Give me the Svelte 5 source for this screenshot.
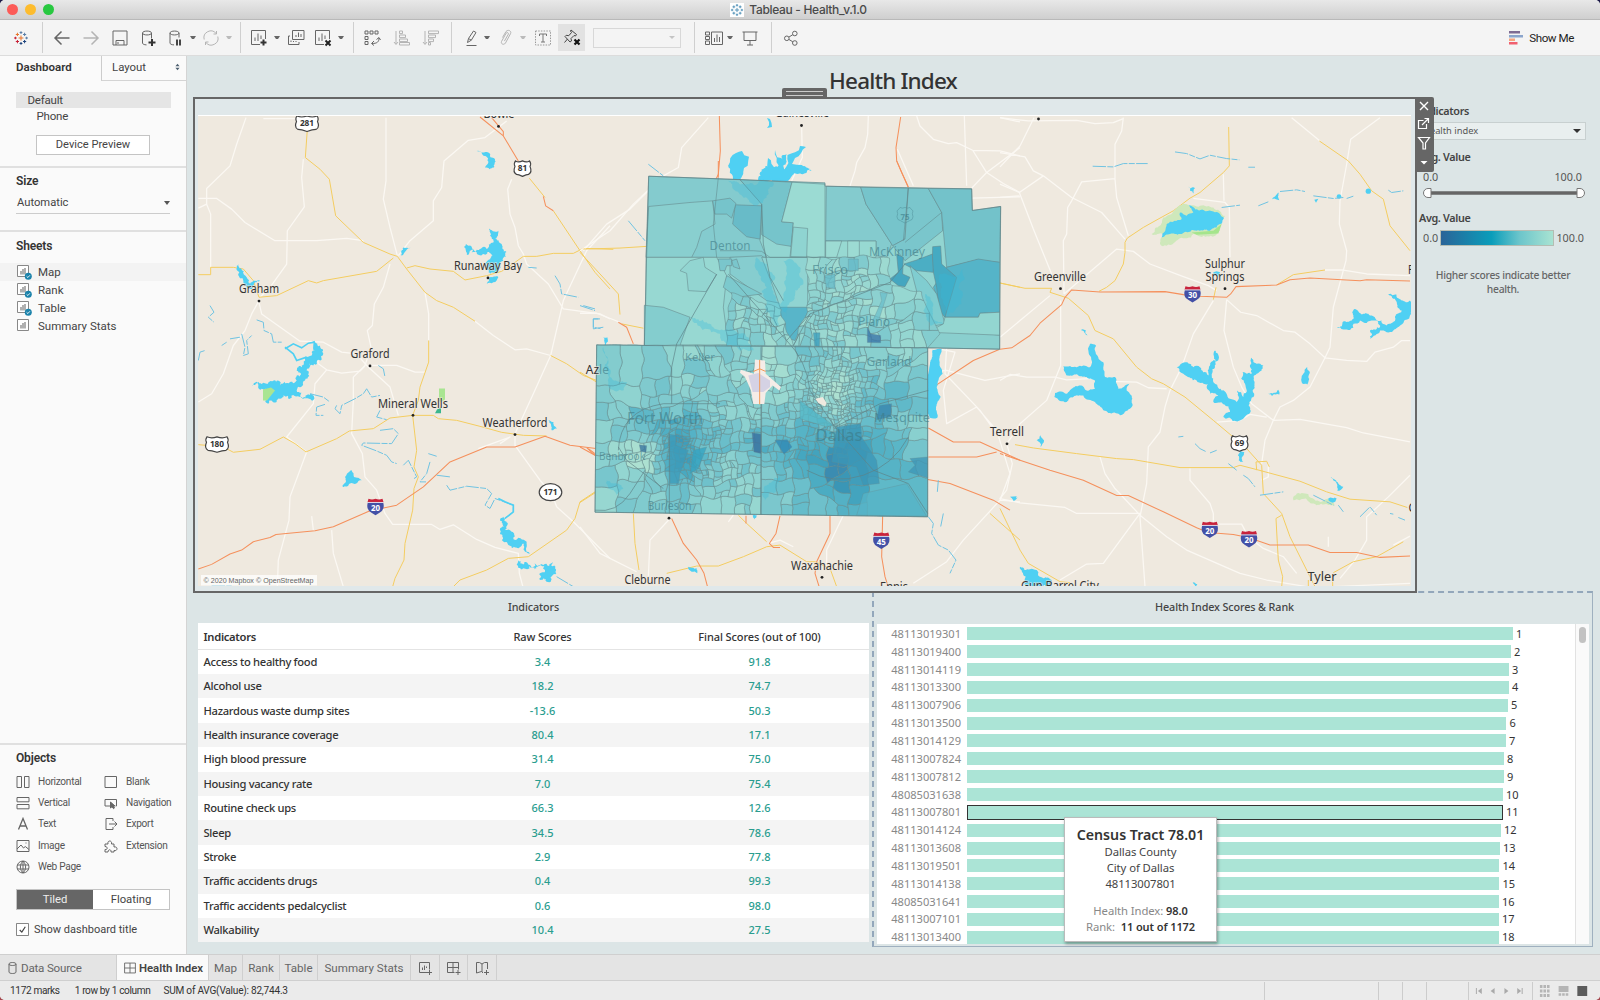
<script>
  const icons = {
    back: [{ d: 'M17.5 10H3M9.5 3.5L3 10l6.5 6.5', w: 1.5 }],
    fwd: [{ d: 'M2.5 10H17M10.5 3.5L17 10l-6.5 6.5', w: 1.5, c: '#b4b4b4' }],
    save: [{ d: 'M3 3h14v14H3zM6 17v-4.5h8V17M8 16v-2' }],
    dbadd: [{ d: 'M4.5 5v10c0 1 1.5 1.8 4 1.9M13.5 5v5.5M4.5 5c0-2.6 9-2.6 9 0s-9 2.6-9 0' }, { d: 'M14 11v7M10.5 14.5h7', w: 2, c: '#333' }],
    dbpause: [{ d: 'M5 5v10c0 1 1.5 1.8 4 1.9M14 5v4.5M5 5c0-2.6 9-2.6 9 0s-9 2.6-9 0' }, { d: 'M12 11.5v6M15 11.5v6', w: 1.8, c: '#333' }],
    refresh: [{ d: 'M3.2 11.5A6.8 6.8 0 0 1 15 5.4M16.8 8.5A6.8 6.8 0 0 1 5 14.6M12.5 6h3V3M7.5 14h-3v3', c: '#b4b4b4' }],
    chartadd: [{ d: 'M11 16.5H2.5v-14h14V11M6 13V9.500M9 13V5.500M12 11V7.500' }, { d: 'M14.500 11.500v6M11.500 14.500h6', w: 2, c: '#333' }],
    dup: [{ d: 'M6.500 2.500h11.500v9H6.500zM10 9V7M12.500 9V4.500M15 9V6M4 8H2.500v8.500H13V14M5 14v-1.500M7.500 14v-1M10 14v-1' }],
    chartx: [{ d: 'M11 16.5H2.500v-14h14V11M6 13V9.500M9 13V5.500M12 11V7.500' }, { d: 'M12.500 12.500l5 5M17.500 12.500l-5 5', w: 2, c: '#222' }],
    swap: [{ d: 'M3 3h3v3H3zM8 3h3v3H8zM13 3h3v3h-3zM3 8.500h3v3H3zM3 13.500h3v3H3zM17 10c0 4-2 5.500-7 5.500M14.500 11.500L17 9.500l1.500 2.500M12 13l-2.500 2.500L12 17.500' }],
    asc: [{ d: 'M4 3v13M2 14l2 2.500L6 14M7.500 3h3v2.600h-3zM7.500 7h6v2.600h-6zM7.500 11h8v2.600h-8zM7.500 14.500h10V17h-10z', c: '#b4b4b4' }],
    desc: [{ d: 'M4 3v13M2 14l2 2.500L6 14M7.500 3h10v2.600h-10zM7.500 7h7v2.600h-7zM7.500 11h5v2.600h-5zM7.500 14.500h2V17h-2z', c: '#b4b4b4' }],
    pen: [{ d: 'M5.500 17.500h10M6.500 14.500l1-4L12.500 3l2.500 1.500-4.700 7.700zM7.500 10.500l2.800 1.700' }],
    clip: [{ d: 'M6.500 9.500l3.500-6c2-2.500 6-.5 4.500 2.200l-5 9.300c-1.500 2.500-5 1-4-1.500l4.700-8.400c1-1.200 2.700-.2 2.200 1l-4 7', c: '#b4b4b4' }],
    tbox: [{ d: 'M2.500 3h15v14h-15z', dash: '1.500 1.200', c: '#999' }, { d: 'M6.500 8V6h7v2M10 6v8M8 14h4', c: '#777' }],
    pin: [{ d: 'M9 3l5.500 4.500-1 1.500-1.500-.5-3 3 .5 2.500-1.500 1L3 9.500l1.200-1.200 2.600.4L9.500 5.500 8.500 4zM5.500 12L2.500 15.500', c: '#444' }, { d: 'M12.500 12.500l5 5M17.500 12.500l-5 5', w: 2.200, c: '#111' }],
    layout: [{ d: 'M1.500 4h4v3h-4zM1.500 8.500h4v3h-4zM1.500 13h4v3.500h-4zM7.500 4h11v12.500h-11zM10.500 14v-4M13 14V6.500M15.500 14V9' }],
    present: [{ d: 'M2.500 4h15M4 4v8.500h12V4M10 12.500V17M7 17h6' }],
    share: [{ d: 'M3.500 10.300a2.300 2.300 0 1 0 4.600 0 2.300 2.300 0 1 0-4.600 0M11.500 5.500a2.300 2.300 0 1 0 4.600 0 2.300 2.300 0 1 0-4.600 0M11.500 15a2.300 2.300 0 1 0 4.600 0 2.300 2.300 0 1 0-4.600 0M8 9l3.800-2.300M8 11.500l3.800 2.300' }],
    horizontal: [{ d: 'M4 4.500h4.500v11H4zM11.500 4.500H16v11h-4.500z' }],
    vertical: [{ d: 'M4 4.500h12v4.300H4zM4 11.500h12v4.300H4z' }],
    text: [{ d: 'M5.500 15.500L10 4.500l4.500 11M7 12h6', w: 1.3 }],
    image: [{ d: 'M4 4.500h12v11H4zM4 13l4-4 2.500 3 1.800-1.500L16 13.500M12.500 7h1' }],
    web: [{ d: 'M4 10a6 6 0 1 0 12 0 6 6 0 1 0-12 0M4 8h12M4 12h12M10 4c-3.500 3.500-3.500 8.500 0 12M10 4c3.500 3.500 3.500 8.500 0 12M10 4v12' }],
    blank: [{ d: 'M4 4.500h11.500v11H4z' }],
    nav: [{ d: 'M9 13H4V6.500h11.500V13h-1' }, { d: 'M9.500 9v6l1.500-1.300 1.500 2 1-.8-1.300-1.900H14z', f: '#666' }],
    export: [{ d: 'M12 7V4.500H5v11h7V13M8 10h8M13.500 7.500L16 10l-2.500 2.500' }],
    ext: [{ d: 'M4 8h3c-1-4 4.500-4 3.500 0H13v3c4-1 4 4.500 0 3.500V16h-3c.5-3-3-3-3 0H4v-2.500c3 .5 3-3 0-3z' }],
    sheetadd: [{ d: 'M12 14.500H4.500v-10h10v7M7.500 12V9.500M9.500 12V7.500M11.500 10V8.500M14.500 12v5M12 14.500h5' }],
    dashadd: [{ d: 'M11.500 14.500H4.500v-10h11v7M10 4.500v10M4.500 9.500h11M15 12v5M12.500 14.500h5' }],
    storyadd: [{ d: 'M11 15l-1.500-1.500L4.500 15V4.500h3l2.500 1.500 2.500-1.500h3V11M10 6v8M14.500 12v5M12 14.500h5' }],
    dash: [{ d: 'M4 4.500h12v11H4zM10 4.500v11M4 10h12' }],
    cyl: [{ d: 'M6 6v8c0 2 7 2 7 0V6M6 6c0-2 7-2 7 0s-7 2-7 0' }]
  };
  // [kind, leading space]
  const tools = [
    ['logo', 11], ['sep', 11], ['back', 9], ['fwd', 9], ['save', 9], ['dbadd', 8], ['dbpause', 7], ['caret', 5],
    ['refresh', 5], ['caretoff', 5], ['sep', 8], ['chartadd', 8], ['caret', 5], ['dup', 6], ['chartx', 7], ['caret', 5],
    ['sep', 9], ['swap', 8], ['asc', 10], ['desc', 9], ['sep', 10], ['pen', 9], ['caret', 3], ['clip', 6], ['caretoff', 4],
    ['tbox', 7], ['pin', 5], ['combo', 8], ['sep', 13], ['layout', 9], ['caret', 3], ['present', 7], ['sep', 11], ['share', 9]
  ];
  const sheets = ['Map', 'Rank', 'Table', 'Summary Stats'];
  const objects = [
    ['horizontal', 'Horizontal'], ['blank', 'Blank'], ['vertical', 'Vertical'], ['nav', 'Navigation'],
    ['text', 'Text'], ['export', 'Export'], ['image', 'Image'], ['ext', 'Extension'], ['web', 'Web Page']
  ];
  const rows = [
    ['Access to healthy food', '3.4', '91.8'], ['Alcohol use', '18.2', '74.7'], ['Hazardous waste dump sites', '-13.6', '50.3'],
    ['Health insurance coverage', '80.4', '17.1'], ['High blood pressure', '31.4', '75.0'], ['Housing vacancy rate', '7.0', '75.4'],
    ['Routine check ups', '66.3', '12.6'], ['Sleep', '34.5', '78.6'], ['Stroke', '2.9', '77.8'],
    ['Traffic accidents drugs', '0.4', '99.3'], ['Traffic accidents pedalcyclist', '0.6', '98.0'], ['Walkability', '10.4', '27.5']
  ];
  const ranks = [
    ['48113019301', 546], ['48113019400', 544], ['48113014119', 542], ['48113013300', 542], ['48113007906', 541],
    ['48113013500', 539.500], ['48113014129', 539], ['48113007824', 537], ['48113007812', 537], ['48085031638', 536],
    ['48113007801', 536], ['48113014124', 534], ['48113013608', 533], ['48113019501', 532.500], ['48113014138', 532.500],
    ['48085031641', 532], ['48113007101', 532], ['48113013400', 532]
  ];

  function rng(seed) {
    let s = seed;
    return () => {
      s = (s * 1664525 + 1013904223) % 4294967296;
      return s / 4294967296;
    };
  }
  // Roughens a coarse outline so that it reads as a natural shoreline.
  function shore(str, amp = 0.22, depth = 4) {
    const n = str.trim().split(/[ ,]+/).map(Number);
    let pts = [];
    for (let i = 0; i < n.length; i += 2) pts.push([n[i], n[i + 1]]);
    const r = rng(n[0] * 7 + n[1]);
    for (let k = 0; k < depth; k++) {
      const out = [];
      pts.forEach((p, i) => {
        const q = pts[(i + 1) % pts.length];
        const dx = q[0] - p[0], dy = q[1] - p[1];
        out.push(p);
        if (Math.hypot(dx, dy) > 6) {
          const o = (r() - 0.5) * 2 * amp;
          out.push([(p[0] + q[0]) / 2 - dy * o, (p[1] + q[1]) / 2 + dx * o]);
        }
      });
      pts = out;
    }
    return 'M' + pts.map((p) => p[0].toFixed(1) + ' ' + p[1].toFixed(1)).join('L') + 'Z';
  }
  // Census tract mesh: convex cells split until they reach the local tract size.
  const blob = (x, y, cx, cy, sx, sy = sx) => Math.exp(-(((x - cx) / sx) ** 2) - ((y - cy) / sy) ** 2);
  function cellSize(x, y) {
    let s = 62;
    s -= 46 * blob(x, y, 780, 720, 130, 170) + 32 * blob(x, y, 270, 850, 150, 120) + 27 * blob(x, y, 520, 780, 260, 160);
    s -= 34 * blob(x, y, 740, 420, 190, 170) + 26 * blob(x, y, 500, 480, 110, 90) + 22 * blob(x, y, 420, 960, 200, 90);
    s += 80 * blob(x, y, 960, 1010, 120, 100) + 50 * blob(x, y, 110, 640, 120, 90) + 40 * blob(x, y, 90, 980, 90);
    return Math.max(17, s);
  }
  function darkness(x, y, r) {
    let v = 0.21 + (r - 0.5) * 0.2;
    v += 0.42 * blob(x, y, 300, 890, 80, 90) + 0.2 * blob(x, y, 230, 790, 150, 60) + 0.34 * blob(x, y, 800, 890, 90, 80);
    v += 0.25 * blob(x, y, 880, 960, 190, 120) + 0.2 * blob(x, y, 560, 850, 130, 60) + 0.18 * blob(x, y, 890, 720, 110, 90);
    v += 0.18 * blob(x, y, 720, 960, 120, 120) + 0.14 * blob(x, y, 690, 780, 60, 60) + 0.14 * blob(x, y, 700, 590, 80, 50);
    v -= 0.22 * blob(x, y, 770, 690, 60, 100) + 0.35 * blob(x, y, 190, 890, 60, 60) + 0.12 * blob(x, y, 590, 600, 90, 70);
    v -= 0.08 * blob(x, y, 850, 400, 250, 120);
    return Math.max(0, Math.min(0.75, v));
  }
  const ramp = [[172, 224, 209], [148, 214, 209], [122, 199, 205], [92, 183, 200], [70, 168, 192], [58, 150, 182], [60, 110, 162]];
  function shade(v) {
    const t = Math.min(5.999, v * 7), i = Math.floor(t), f = t - i;
    return 'rgb(' + ramp[i].map((c, k) => Math.round(c + (ramp[i + 1][k] - c) * f)).join(',') + ')';
  }
  function clip(poly, px, py, nx, ny) {
    const out = [];
    poly.forEach((a, i) => {
      const b = poly[(i + 1) % poly.length];
      const da = (a[0] - px) * nx + (a[1] - py) * ny, db = (b[0] - px) * nx + (b[1] - py) * ny;
      if (da >= 0) out.push(a);
      if (da >= 0 !== db >= 0) out.push([a[0] + ((b[0] - a[0]) * da) / (da - db), a[1] + ((b[1] - a[1]) * da) / (da - db)]);
    });
    return out;
  }
  // Position-based bend shared by neighbouring cells, so that borders wander but still meet.
  const bend = (x, y) => {
    const fade = Math.max(0, Math.min(1, (x - 50) / 20, (1040 - x) / 20, (1058 - y) / 20, Math.abs(y - 557) / 20, Math.abs(x - 544) / 12));
    return [
      x + fade * (3.2 * Math.sin(y / 9 + x / 37) + 4 * Math.sin(y / 31 + 1.3)),
      y + fade * (3.2 * Math.sin(x / 10 + y / 41) + 4 * Math.sin(x / 29 + 0.4))
    ];
  };
  function outline(p) {
    const out = [];
    p.forEach((a, i) => {
      const b = p[(i + 1) % p.length];
      const n = Math.max(1, Math.round(Math.hypot(b[0] - a[0], b[1] - a[1]) / 9));
      for (let k = 0; k < n; k++) out.push(bend(a[0] + ((b[0] - a[0]) * k) / n, a[1] + ((b[1] - a[1]) * k) / n));
    });
    return 'M' + out.map((q) => q[0].toFixed(1) + ' ' + q[1].toFixed(1)).join('L') + 'Z';
  }
  function mesh(start, seed) {
    const r = rng(seed), cells = [];
    const split = (p, depth) => {
      const xs = p.map((q) => q[0]), ys = p.map((q) => q[1]);
      const x0 = Math.min(...xs), x1 = Math.max(...xs), y0 = Math.min(...ys), y1 = Math.max(...ys);
      const cx = (x0 + x1) / 2, cy = (y0 + y1) / 2, big = Math.max(x1 - x0, y1 - y0);
      if (p.length < 3) return;
      if (depth > 14 || big < cellSize(cx, cy) * (0.75 + r() * 0.9)) {
        cells.push({ d: outline(p), fill: shade(darkness(cx, cy, r())) });
        return;
      }
      const vertical = x1 - x0 > y1 - y0;
      const tilt = r() < 0.72 ? 0 : (r() - 0.5) * 1.1;
      const a = (vertical ? 0 : Math.PI / 2) + tilt;
      const f = 0.3 + r() * 0.4;
      const px = x0 + (x1 - x0) * (vertical ? f : 0.5), py = y0 + (y1 - y0) * (vertical ? 0.5 : f);
      split(clip(p, px, py, Math.cos(a), Math.sin(a)), depth + 1);
      split(clip(p, px, py, -Math.cos(a), -Math.sin(a)), depth + 1);
    };
    split(start, 0);
    return cells;
  }
  const tracts = [
    ...mesh([[50, 553], [546, 555], [543, 1063], [45, 1056]], 11),
    ...mesh([[546, 555], [1043, 562], [1043, 1070], [543, 1063]], 29),
    ...mesh([[450, 400], [600, 440], [640, 555], [440, 555]], 5),
    ...mesh([[683, 290], [930, 290], [928, 365], [683, 460]], 17),
    ...mesh([[683, 460], [928, 365], [1020, 400], [1080, 520], [1043, 562], [640, 556]], 23)
  ];
  const northern = [
    ['M206 46L480 56L545 130L540 240L560 290L198 290Z', '#84cbce'],
    ['M206 137L330 125L398 120L405 190L365 212L350 260L335 290L198 290Z', '#89cfcf'],
    ['M198 290L410 290L440 345L430 440L445 553L193 555L197 434Z', '#97d8d2'],
    ['M193 434L250 440L330 470L300 555H193Z', '#84cdce'],
    ['M300 330L330 300L370 290L375 320L410 342L378 393L325 390L320 338Z', '#92d5d1'],
    ['M480 56L636 64L605 183L640 186L634 257L590 250L545 222L545 130Z', '#76c4cb'],
    ['M466 132L545 135L540 235L500 228L458 190Z', '#68bbc8'],
    ['M398 120L450 112L468 128L455 172L440 160L405 160Z', '#76c4cb'],
    ['M636 64L735 70L735 290L630 290L640 186L605 183Z', '#9bdbd3'],
    ['M640 199L683 203L680 289L632 288Z', '#8fd4d1'],
    ['M739 76L842 79L858 130L935 250L920 290L888 285L888 241H737Z', '#84cbce'],
    ['M842 79L985 82L975 235L938 255L858 130Z', '#76c4cb'],
    ['M985 82L1045 83L1085 155L1088 210L975 300L938 255L975 235Z', '#7ac6cc'],
    ['M1045 83L1175 84L1177 149L1262 137L1259 305L1190 298L1100 320L1085 155Z', '#73c2ca'],
    ['M1100 320L1195 295L1259 305L1259 455L1200 458L1195 470L1095 470L1060 380Z', '#55b4c8'],
    ['M1058 258L1082 256L1085 310L1130 350L1095 470L1078 450L1070 380L1057 320Z', '#45aac2'],
    ['M972 310L1010 298L1057 280L1060 335L1010 330Z', '#4baec4'],
    ['M990 315L1040 360L1070 400L1095 490L1040 500L1020 430Z', '#80cdd0'],
    ['M1043 500L1259 524V566L1043 562Z', '#8acfce'],
    ['M1095 470L1195 470L1200 458L1259 455V524L1043 515L1090 490Z', '#93d6d1'],
    ['M737 241H888V290H737Z', '#97d9d2'], ['M737 241H785L770 290H737ZM803 241H838V290H803Z', '#9cdbd3'],
    ['M450 290L545 285L600 330L610 430L560 420L450 340Z', '#86cdcf'],
    ['M545 290L683 290V460L640 470L600 440L580 380Z', '#90d4d2'],
    ['M600 440L690 440L645 540L610 530Z', '#58b5c9'],
    ['M950 280L970 290L968 340L990 350L975 378L955 375L930 355L955 335Z', '#45a6c0'],
    ['M440 345L545 400L470 410L430 380Z', '#7cc9cd'],
    ['M415 295H455V315H440L435 330H420ZM455 300L470 295L480 325L460 318Z', '#7ac6cc']
  ];
  const accents = [
    ['M516 817L543 822V880L522 875Z', '#3a6f9f'], ['M585 840L622 838L636 860L612 882Z', '#2f88b5'],
    ['M862 500L872 520L902 525V547L862 546Z', '#3a74a8'], ['M178 853L200 856L198 876L182 874Z', '#37749f'],
    ['M990 895L1043 890V953L985 935L1005 915Z', '#3f96b6'], ['M268 822L288 825V855L325 870L300 940L296 970L270 970Z', '#3c9bba'],
    ['M898 735L935 730L932 770L890 778Z', '#3a86ad'], ['M770 800L842 790L845 830L890 900L898 970L850 975L830 920L755 905Z', '#3b96b6'],
    ['M340 870L380 860L355 925L330 940Z', '#35a3c0'], ['M700 517L720 517L718 558L704 556Z', '#3c9fbc'],
    ['M900 395L922 398L890 500L872 495L905 420Z', '#6bbfca'], ['M805 295H835V330H805ZM735 345L765 340V385L738 380Z', '#66bbc9'],
    ['M850 1000L980 970L1040 1068L830 1065Z', '#56b3c7'], ['M660 720L760 795L740 800L660 775Z', '#55b8c8']
  ];
  const labels = [
    ['Graham', 259, 292.500, 40], ['Runaway Bay', 488, 269, 68], ['Graford', 370, 358, 39], ['Mineral Wells', 413, 407.500, 70],
    ['Weatherford', 515, 426.500, 65], ['Greenville', 1060, 280.500, 52], ['Sulphur', 1225, 267, 40],
    ['Springs', 1225, 280.500, 39], ['Terrell', 1007, 435.500, 34], ['Waxahachie', 822, 569.500, 62], ['Cleburne', 647.500, 584.500, 46],
    ['Ennis', 894, 591, 28], ['Gun Barrel City', 1060, 590, 78], ['Bowie', 499, 117, 31], ['Gainesville', 802, 116.500, 54],
    ['P', 1411, 273, 6], ['C', 1412, 512, 7]
  ];
  const dots = [
    [259, 300.500], [488, 277.300], [370, 365.500], [413, 415], [515, 434.300], [1060.500, 288], [1225, 288], [1007, 443.500],
    [822, 577.300], [498.500, 125.500], [801.500, 124.500], [1038.500, 118], [669, 518]
  ];
  const muted = [
    ['Denton', 730, 249, 41, 12], ['McKinney', 897, 255.500, 56, 12], ['Frisco', 830, 273, 36, 12], ['Plano', 874, 325, 32, 12],
    ['Keller', 700, 361, 30, 11], ['Garland', 889, 365.500, 45, 12], ['Mesquite', 902, 422, 56, 12], ['Fort Worth', 665, 424, 76, 16],
    ['Dallas', 839, 441, 47, 17], ['Benbrook', 622, 460, 46, 11], ['Burleson', 669.500, 510, 44, 12]
  ];
  const us = [['281', 307, 122.500, 11], ['81', 522.500, 167.500, 8], ['180', 217, 444, 11], ['69', 1239.500, 443, 8]];
  const interstates = [['20', 375.500, 506.500], ['30', 1192.500, 293.500], ['20', 1209.800, 529.500], ['20', 1249, 539], ['45', 881.300, 540.500]];
</script>

{#snippet icon(name)}
  <svg class="ic" viewBox="0 0 20 20">
    {#each icons[name] as p}
      <path d={p.d} fill={p.f ?? 'none'} stroke={p.c ?? '#666'} stroke-width={p.w ?? 1} stroke-dasharray={p.dash} />
    {/each}
  </svg>
{/snippet}

{#snippet spark(cls)}
  <svg class={cls} viewBox="0 0 20 20" fill="none" stroke-width="1.300">
    <path stroke="#e8762c" d="M10 7v6M7 10h6M5.500 3.500v4M3.500 5.500h4" />
    <path stroke="#5b7fa8" d="M10 1.500v3.500M8.300 3.200h3.400M14.500 3.500v4M12.500 5.500h4M17 8.300v3.400M15.300 10h3.400" />
    <path stroke="#c72035" d="M5.500 12.500v4M3.500 14.500h4M3 8.300v3.400M1.300 10h3.400" />
    <path stroke="#1f457e" d="M14.500 12.500v4M12.500 14.500h4M10 15v3.500M8.300 16.800h3.400" />
  </svg>
{/snippet}

<div class="window">
  <header class="titlebar">
    <div class="lights"><i class="red"></i><i class="amber"></i><i class="green"></i></div>
    <div class="doc">{@render spark('doc-icon')}<span>Tableau - Health_v.1.0</span></div>
  </header>

  <div class="toolbar">
    {#each tools as [kind, lead]}
      <div class="tool {kind}" style:margin-left="{lead}px">
        {#if kind === 'logo'}{@render spark('ic')}
        {:else if kind === 'sep' || kind === 'caret' || kind === 'caretoff'}<i></i>
        {:else if kind === 'combo'}<i></i>
        {:else}{@render icon(kind)}{/if}
      </div>
    {/each}
    <div class="showme">
      <svg viewBox="0 0 15 14"><path fill="#7e6b93" d="M0 0h11v2.500H0z" /><path fill="#8ba5cc" d="M0 4h14v2.500H0z" /><path fill="#f5a57f" d="M0 7.500h6V10H0z" /><path fill="#f1606f" d="M0 11h8.500v2.500H0z" /></svg>
      <span>Show Me</span>
    </div>
  </div>

  <div class="main">
    <aside>
      <div class="tabs-top"><b>Dashboard</b><div class="layout-tab"><span>Layout</span><svg viewBox="0 0 6 8"><path d="M3 0l2.500 3h-5zM3 8L.5 5h5z" fill="#4d5f70" /></svg></div></div>
      <div class="devices">
        <div class="dev sel">Default</div>
        <div class="dev phone">Phone</div>
        <button>Device Preview</button>
      </div>
      <section class="size"><h3>Size</h3><div class="select"><span>Automatic</span><i></i></div></section>
      <section class="sheets">
        <h3>Sheets</h3>
        {#each sheets as s, i}
          <div class="sheet" class:hl={i === 0}>
            <svg viewBox="0 0 16 16">
              <path d="M1.500 1.500h11v11h-11z" fill="#fff" stroke="#888" />
              <path d="M4 7h2V5h2V4h2v6.500H4z" fill="#b0b0b0" />
              {#if i < 3}<circle cx="12.300" cy="12.300" r="3.500" fill="#1c83ab" /><path d="M10.600 12.300l1.300 1.200 2-2.200" fill="none" stroke="#fff" stroke-width=".9" />{/if}
            </svg>
            <span>{s}</span>
          </div>
        {/each}
      </section>
      <section class="objects">
        <h3>Objects</h3>
        <div class="obj-grid">
          {#each objects as [ic, name]}<div class="obj">{@render icon(ic)}<span>{name}</span></div>{/each}
        </div>
        <div class="toggle"><span class="on">Tiled</span><span>Floating</span></div>
        <div class="check"><svg viewBox="0 0 14 14"><path d="M.5.5h13v13H.5z" fill="#fff" stroke="#777" /><path d="M4 7.500l2.300 2.300L10 4" fill="none" stroke="#444" stroke-width="1.300" /></svg><span>Show dashboard title</span></div>
      </section>
    </aside>

    <div class="canvas">
      <h1>Health Index</h1>
      <div class="top">
        <div class="mapzone">
          <div class="grip"><i></i><i></i></div>
          <svg class="map" viewBox="198 115 1213 471" preserveAspectRatio="none">
            <rect x="198" y="115" width="1213" height="471" fill="#efe9df" />
            <g fill="none" stroke-linejoin="round">
              <g transform="translate(190 100) scale(.33333)">
                <g class="white">
                  <path d="M168 50L140 130L120 195L50 263V310L62 340V500M25 293H80L125 325L165 365L255 420H380L470 413L520 420M25 322L50 310M220 53H320M588 50V240L580 295L600 380L622 465M340 175L335 230L343 318L292 390L290 490L240 560L210 590M600 490L580 560L553 610L547 675L532 690L543 740L525 795L490 830V900L485 1000L517 1060L525 1130L560 1170L585 1240L608 1273H725L750 1288L790 1274L860 1318L915 1342L985 1360L988 1420L1000 1465" />
                  <path d="M950 60L885 110L835 118L762 180L755 260L730 300V360L660 420L625 465M965 235L953 265L960 340L975 380L985 435L1000 460L1010 490L1075 550L1120 625L1230 640L1260 655M1260 375L1190 450L1120 600L1082 765L1030 880L975 1000M1082 765L1010 745L975 748L910 705L855 662M705 575L716 640V720M540 795H620L675 815H705M207 605L215 640L330 722L400 725L455 755L500 760L530 795L600 860L625 945M207 600L185 640L165 690L130 735L100 820L65 880L25 905M375 730L385 790L410 808L455 818L510 812L525 797M410 808L375 850L370 910L290 1010L350 1055L300 1190L297 1260L265 1380L262 1460M975 1000L975 1035L1050 1140L1085 1180L1100 1220L1150 1265L1260 1375M425 1290L430 1360L460 1460M370 1290L365 1248M865 1045L960 1010L930 1030" />
                </g>
                <g class="yellow"><path d="M352 85L346 170L390 205L418 235L437 345L520 425L600 460L622 467L650 505L705 575L740 600L790 620L855 662M25 522H62V500H130L160 505L190 540L207 590L260 585L355 540L380 547L400 540L560 512L610 472M650 502L675 495L720 505L790 512L825 538L890 525L935 512L975 485L1000 467H1040L1090 458H1150L1180 443L1270 446M1018 232L1065 290M1090 330L1170 450L1215 515L1260 565M1082 765L1130 790L1180 825L1220 840M716 720V785L690 860L685 900L668 945L680 1050L672 1100L685 1130L672 1165L668 1230L645 1330L642 1380L615 1435L608 1460M25 1033L100 1040L130 1056L210 1047L280 1010L315 1030L348 1055L440 1015L478 992L550 985L600 953L668 945H730L745 955L800 960L870 978L935 996L1000 1005L1070 1007M1260 1150L1215 1175L1170 1205L1155 1255L1130 1290L1015 1370L955 1375L890 1410L810 1440L790 1460" /></g>
                <g class="orange"><path d="M870 48L940 105L985 180M905 50L940 92V105M1060 287L1067 315L1090 330M25 1407L65 1393L120 1362L155 1350L190 1325L240 1312L258 1303L375 1292L430 1280L540 1232L620 1215L700 1160L780 1085L890 1040H975L1065 1008L1140 1035L1260 1050M1190 1042L1215 1065" /></g>
              </g>
              <g transform="translate(1000 100) scale(.33333)">
                <g class="white">
                  <path d="M0 50L85 60L230 58L285 68L340 65L370 53M102 50L60 135L0 198M0 155L75 168L100 210L130 225L215 290L305 335L375 415M130 225L58 275L0 250M58 275L100 385L155 520M0 290L58 285M370 50L365 90L345 130V235L350 290L385 405M345 233L245 243L215 300L203 320L200 400L190 420L192 580M0 710L150 585M192 580L350 445L400 452L450 490L550 528L625 555L650 570M580 293L675 305L688 320L690 470M670 220L672 300M875 50L960 120M1140 50L1052 115L1040 190L1020 300L1018 370L1040 450L1038 480L1000 620L990 740L975 772L930 860L880 900L840 920L820 960L795 1020L785 1090M975 508H1030L1100 520L1230 525M680 597L722 635L770 645L850 690L885 695L930 730L975 772L1040 780L1100 783L1125 755L1180 740L1205 720H1230M680 597L672 690L700 800L725 860L755 910L820 960M640 600L580 700L545 800L510 870L495 920L480 995L445 1040L440 1150L420 1250L435 1460M182 600V795L160 850L140 900L60 970L35 1010L20 1030L37 1090L20 1170L0 1195L60 1208L195 1222L230 1240H420L310 1390L260 1392L180 1440M0 840L30 822L80 830H165L200 838L310 832L340 843L410 845L445 862L500 865M820 960L900 957L1040 982L1090 998L1230 1025M650 965L720 960L750 942L800 950M300 1070L315 1120L345 1165L420 1245L500 1310L560 1350L720 1420L800 1440L920 1460M570 1105V1140L600 1175L630 1210L640 1240V1270M655 1272H725L745 1310L790 1345L850 1370L890 1420M1230 1125L1165 1190L1100 1250V1320L1065 1380L1020 1435M1230 1308L1180 1335M985 1310V1340M1000 1460L1230 1450M805 1090V1130L785 1140" />
                </g>
                <g class="yellow"><path d="M686 78L688 195L670 215L600 275L570 292L520 330L480 352L430 380L382 412L375 425V455L370 490L345 540L320 560L297 572M958 120L1045 180L1080 220L1115 270L1150 295L1170 375L1230 450M0 547L75 563H155L150 575L205 593L265 645L285 690L340 715L410 800L455 835L490 850L555 890L640 960L690 1002L740 1045L785 1095L790 1180L845 1240L870 1310L920 1410L945 1460M830 553L880 522L975 508M648 560L640 597M45 1033L100 1043L230 1060L350 1075L400 1078L540 1102H700L720 1095L770 1108L900 1143L980 1175L1050 1197L1170 1205L1222 1222M770 1110L768 1085L800 1083L808 1100M845 1245L828 1255L832 1330L835 1380L848 1430L845 1460M0 1225L60 1350L85 1390L180 1445L210 1448M1210 1325L1130 1370L1060 1385L1000 1418M925 1440V1460M998 1445V1460" /></g>
                <g class="orange"><path d="M0 746L35 742L90 705L120 668L185 612L195 590L215 568L300 574L495 573L550 582L600 587L680 590L692 580L708 558L830 553L870 537L930 532L1080 540L1100 537L1230 541M0 1060L60 1080L150 1110L250 1140L350 1186H385L490 1235L590 1283L625 1297L700 1303L745 1312L810 1335H925L990 1357H1070L1140 1372L1230 1368" /></g>
              </g>
              <g transform="translate(600 0) scale(.33333)">
                <g class="white"><path d="M325 350L245 440L235 500L190 525L100 610L30 690L-60 750M605 380L607 470L575 540M805 345L803 400L795 440L770 485L765 510L750 555M892 445L940 555M950 345L960 375L1000 415L1045 428L1070 425L1118 448L1200 450L1260 465M1093 345L1100 555M1200 350L1260 363M1118 448L1160 515L1210 548L1260 575M1260 440L1160 515L1115 562M1115 592L1260 588" /></g>
                <g class="orange"><path d="M358 345L361 450L355 520L348 535M902 348L888 440L890 480L905 515L925 558" /></g>
              </g>
              <g transform="translate(580 160) scale(.33333)">
                <g class="white"><path d="M10 270L80 190L150 145L205 90M0 458H50L120 485M1050 560L1125 575L1090 690L1100 790L1190 740L1250 810L1290 940L1260 1020M1260 1020L1320 1025M1260 1020L1150 1140L1100 1205L1000 1270M1050 635L1100 630L1215 660L1320 640M1100 560L1095 640L1200 750L1250 820M0 1100L60 1180L170 1235M270 1075L210 1140L205 1250M460 1065L445 1085M790 1065L740 1170V1230M565 1150L600 1140L640 1160" /></g>
                <g class="yellow"><path d="M10 265L120 262L200 257M0 275L60 340L115 400L120 462M125 490L190 503M0 635L50 665M0 1027L45 998M1259 367L1320 380M160 1060L165 1150L177 1230M475 1065L500 1090L560 1145M260 1240L350 1218H415L490 1190L560 1160L600 1155L680 1205H705L750 1225L770 1280M1230 1060L1320 1140" /></g>
                <g class="orange"><path d="M415 0V50M950 0L985 80M115 485L140 500L160 550M0 860L45 885M25 865L45 880M1259 566L1180 600L1045 690M1045 803L1120 845L1200 845L1320 900M1045 890H1190L1250 875M1043 958L1110 970L1240 1020L1290 1050M275 1075L310 1150L350 1200L372 1240L383 1282M600 1067L588 1120L568 1150L580 1162H600M750 1067V1120L710 1205L705 1240L718 1282M908 1067L905 1190L915 1250L925 1282M498 1067V1090" /></g>
              </g>
            </g>

            <g class="water">
              <g transform="translate(190 100) scale(.33333)">
                <path d={shore('860,150 895,155 915,175 912,200 885,200 895,185 885,165')} />
                <path d={shore('897,380 925,390 915,415 935,430 940,480 920,515 900,520 890,500 915,460 895,440 890,460 860,455 825,465 828,430 845,455 890,445 910,425 900,405', 0.35)} />
                <path d={shore('890,550 900,530 925,530 910,545')} /><path d={shore('145,490 160,510 170,530 180,550 195,540 210,540 190,560 170,560 160,540 148,515', 0.3)} />
                <path d={shore('365,720 390,735 400,760 380,785 350,810 345,840 320,870 365,880 365,900 330,890 300,895 280,885 260,905 235,910 240,880 215,865 185,855 230,850 270,855 300,845 320,840 325,800 345,775 365,765 375,750', 0.4)} />
                <path d={shore('458,1160 465,1130 485,1110 492,1130 515,1140 480,1150')} /><path d={shore('1075,960 1090,965 1100,985 1085,990')} /><path d={shore('635,465 640,440 662,440 648,450')} />
                <path d={shore('930,1260 940,1250 945,1290 970,1315 1010,1325 1020,1360 1005,1355 1000,1330 955,1335 930,1300', 0.3)} />
                <path d={shore('985,1380 1020,1395 1060,1395 1090,1385 1095,1405 1070,1445 1050,1440 1065,1410 1000,1405', 0.45)} /><path d={shore('1240,710 1252,710 1260,800 1248,780 1245,730')} />
                <path class="stream" d="M200 658L220 665L222 690L245 700L250 725L275 725M155 700L165 740L160 765L175 760L170 720L185 705M120 715L150 710M60 615L72 635L55 650L72 665M95 735L110 725M25 780L30 755L45 750M360 880L400 890L420 905M405 912L380 920L378 945L400 945M440 915L435 925L450 940L455 915L495 895L520 880L530 865L545 890L570 885M565 795L580 805L585 830M570 930L560 950L590 958M570 990L610 985L625 1000L605 1030L520 1028L515 1035L555 1050L590 1065L605 1085L620 1090M640 1095L655 1080L680 1130L672 1135M715 1060L740 1068M720 1085L710 1120L690 1145L708 1145M740 1125L780 1130M770 1155L780 1170L830 1158L890 1165L905 1180L885 1215L900 1225L915 1195L970 1215L970 1235L945 1255M1015 500L1040 502M1095 525L1110 550L1115 580L1165 590M1180 615L1215 625M1225 655L1210 655V680L1235 685M1100 1430L1150 1460M65 1458H125" />
                <path class="inlet" d="M285 745L310 730L335 742L355 728L375 725M285 740L310 760L320 780L350 770M925 1195L945 1205L970 1215V1235L945 1255" />
              </g>
              <g transform="translate(1000 100) scale(.33333)">
                <g fill="#cfe8bb"><path d={shore('455,400 490,350 560,310 640,320 675,345 660,390 580,400 500,435 480,430 490,400')} /><path d={shore('880,1190 915,1180 985,1195 1005,1220 950,1215 880,1200')} /></g>
                <path d="M575 395L640 390L665 370L655 398L590 402Z" fill="#a5e58c" />
                <path d={shore('485,410 500,370 545,355 540,335 560,345 580,335 565,312 595,328 640,332 672,352 650,380 600,390 575,388 540,400 510,400', 0.18)} />
                <path d={shore('563,255 585,262 582,278 570,270')} /><path d={shore('817,295 835,275 838,298')} /><circle cx="1017" cy="287" r="7" /><circle cx="1105" cy="271" r="8" /><path d="M943 297l12-3-7 12z" />
                <path d={shore('270,730 288,735 285,750 310,785 315,830 345,830 355,865 388,850 380,870 397,895 390,925 360,945 325,938 310,930 285,905 250,885 220,890 200,905 163,890 165,878 200,880 240,855 260,870 285,865 285,840 260,830 200,825 190,797 230,800 250,795 270,800 275,780 265,750', 0.16)} />
                <path d={shore('645,750 657,770 645,800 640,835 665,870 690,895 710,905 712,870 730,890 735,850 728,815 755,820 755,772 770,790 790,795 770,820 758,870 748,905 748,940 715,962 670,950 690,935 640,905 655,885 630,880 625,850 590,840 550,820 530,800 560,785 580,800 600,800 625,825 630,795 648,780', 0.25)} />
                <path d={shore('1010,682 1060,655 1060,628 1110,645 1145,660 1160,675 1190,640 1205,630 1165,580 1205,600 1230,600 1230,645 1180,690 1140,690 1110,715 1110,690 1140,680 1120,660 1080,660', 0.25)} />
                <path d={shore('243,688 258,690 262,706')} /><path d={shore('922,800 925,830 922,852 908,850')} /><path d={shore('805,880 835,868 838,882 815,886')} /><path d={shore('110,1020 122,1005 132,1020 122,1040')} /><path d={shore('720,1052 733,1055 730,1085 716,1080')} /><path d={shore('992,1130 1015,1150 1030,1160 1012,1172 1010,1150')} /><path d={shore('985,1195 1010,1195 998,1208')} /><path d={shore('35,1190 53,1192 42,1203')} /><path d={shore('640,515 660,515 655,528 640,525')} />
                <path d={shore('60,1400 90,1408 110,1410 130,1435 155,1440 155,1462 75,1462')} /><path d={shore('578,1448 592,1452 588,1462')} />
                <path class="stream" d="M278 196L340 198L370 188H443M525 153L560 158L600 174L630 163L680 173L718 177M745 199H765M840 272L890 267L915 272M940 285L1000 293L1030 290M1165 268L1175 275L1210 270M1040 293L1060 286M665 320L720 313M775 315L805 303M535 1010L550 1008M585 1030L600 1045L620 1055M650 1050L630 1058M685 1090L710 1110M730 1125L745 1135L765 1160M780 1185L850 1175M1015 1215L1030 1235M1080 1250L1110 1220L1130 1245M1170 1240L1180 1242M1195 1252L1215 1260M940 1185L1000 1215" />
              </g>
              <g transform="translate(580 160) scale(.33333)">
                <path d={shore('1058,568 1085,565 1078,600 1088,640 1070,680 1082,710 1068,740 1072,772 1050,772 1048,620', 0.12)} /><path d={shore('445,20 465,-10 485,-5 480,60 460,58')} />
                <path d={shore('530,60 545,25 570,15 575,35 600,10 605,-15 620,-20 612,25 640,15 695,28 640,30 625,60', 0.3)} /><path d={shore('530,1065 522,1078 518,1066')} /><path d={shore('325,1220 350,1225 352,1240 335,1235')} /><path d="M1290 1010l20-2-5 14z" />
                <path class="stream" d="M1075 960L1072 995M1090 1060L1082 1100M1045 1070L1060 1090L1055 1120L1075 1155L1105 1170L1128 1200L1110 1240M145 180L195 240M205 10L250 45M40 475V505L70 500M40 475H60M0 435L45 450" />
              </g>
              <path d={shore('767,117 770,118 772,126 767,127 769,121')} /><path d={shore('728,165 736,152 742,150 739,178 733,178', 0.3)} /><path d={shore('800,145 806,146 795,157 792,163 810,168 793,172 785,181 762,179 772,172 768,157 776,168 779,165 775,149 784,160 784,169')} />
            </g>
            <path d="M439 388h6v11l-3 2h-3z" fill="#a9e592" /><path d="M263 389l8-2 4 3-8 10h-4z" fill="#a9e592" /><path d="M437 409l4-2v6h-6z" fill="#3ab68d" />

            <g transform="translate(580 160) scale(.33333)">
              <path d="M206 46L735 66V76L1175 84L1177 149L1262 137L1259 566L1043 562V1070L45 1056L50 553L193 555Z" fill="#92d5d1" />
              <g stroke="#66888b" stroke-width="1.700" stroke-linejoin="round">
                {#each northern as [d, fill]}<path {d} {fill} />{/each}
                {#each tracts as t}<path d={t.d} fill={t.fill} stroke-opacity=".9" />{/each}
                {#each accents as [d, fill]}<path {d} {fill} fill-opacity=".78" stroke-opacity=".5" />{/each}
              </g>
              <g fill="#35bcdc" opacity=".32">
                <path d={shore('445,60 500,70 580,65 560,110 530,135 490,110 460,85')} /><path d={shore('530,290 560,310 580,400 605,440 600,500 560,430 545,390 560,380')} /><path d={shore('610,300 660,320 670,370 640,420 620,470 610,400')} />
                <path d={shore('1080,340 1120,350 1150,325 1135,380 1145,430 1105,465 1090,420')} /><path d={shore('1035,400 1060,430 1065,480 1090,490 1050,495 1030,450')} /><path d={shore('330,470 400,500 480,520 520,570 480,570 420,520', 0.3)} />
                <path d={shore('70,560 85,600 90,650 140,665 130,690 90,685 72,620')} /><path d={shore('545,1000 575,965 600,950 590,990 555,1020')} /><path d={shore('80,960 110,970 130,985 110,1005 85,985')} />
              </g>
              <g fill="none" stroke="#5e8286" stroke-width="2">
                <path d="M206 46L735 66V76L1175 84L1177 149L1262 137L1259 566L1043 562V1070L45 1056L50 553L193 555Z" />
                <path d="M193 555L1043 562M445 340L620 540L690 460L930 365L975 310M410 340L290 550L275 620V730M545 130L550 250L570 350L610 420M620 540Q680 600 690 690L765 800M765 800L900 730L1045 690M690 460L640 555M680 930Q760 975 850 945T985 830M115 870Q120 750 250 730H420M543 560V1063M115 860L140 900L250 985M45 1050Q110 1060 150 1000L195 930M765 800L880 930L985 970L1043 1060M268 820V1060" />
                <path d="M420 270H520L545 272L570 290H737M415 50L400 190L410 290M985 82L970 240M1085 155L975 245" stroke-width="1.500" />
              </g>
              <path d="M525 597L555 600L557 640L603 680L598 690L578 675L557 698L553 731H520L513 690L495 650L480 637L482 628L522 640Z" fill="#f5ece7" />
              <path d="M505 645L535 638L570 660V680L550 695H518Z" fill="#d5d2e4" /><path d="M539 598V732M520 633L539 625L557 633" fill="none" stroke="#f29a55" stroke-width="3" />
              <path d="M706 715L728 710L740 728L735 738L715 728Z" fill="#efe9df" />
              <path d="M960 140q8 4 15 0q8 4 15 0q3 6 9 10q-4 8 0 18q0 10-11 12l-13 7l-13-7q-11-2-11-12q4-10 0-18q6-4 9-10z" fill="none" stroke="#4f8f99" stroke-width="2.500" opacity=".6" />
            </g>

            {#each muted as [t, x, y, w, s]}<text class="muted" {x} {y} font-size={s} textLength={w} lengthAdjust="spacingAndGlyphs">{t}</text>{/each}
            <text class="muted" x="905" y="219" font-size="8" font-weight="700">75</text>
            {#each labels as [t, x, y, w]}<text class="place" {x} {y} textLength={w} lengthAdjust="spacingAndGlyphs">{t}</text>{/each}
            <text class="place" x="592.500" y="374">Az</text><text class="muted" x="604" y="374" font-size="12">le</text>
            <text class="place tyler" x="1322" y="581" textLength="29" lengthAdjust="spacingAndGlyphs">Tyler</text>
            {#each dots as [cx, cy]}<circle {cx} {cy} r="1.400" fill="#222" />{/each}

            {#each us as [n, x, y, w]}
              <g transform="translate({x} {y})">
                <path d="M{-w + 1} -7.500Q{-w / 2} -5.500 0 -7.500Q{w / 2} -5.500 {w - 1} -7.500Q{w + 1} -5 {w - 0.5} -2Q{w + 2} 4 {w - 2} 6Q{w / 2} 6 0 8Q{-w / 2} 6 {-w + 2} 6Q{-w - 2} 4 {-w + 0.5} -2Q{-w - 1} -5 {-w + 1} -7.500Z" fill="#fff" stroke="#444" stroke-width="1.200" />
                <text class="shield" y="3">{n}</text>
              </g>
            {/each}
            <g transform="translate(550.500 492)"><ellipse rx="11.300" ry="8.500" fill="#fff" stroke="#444" stroke-width="1.200" /><text class="shield" y="3">171</text></g>
            {#each interstates as [n, x, y]}
              <g transform="translate({x} {y})">
                <path d="M-7.500 -5Q-10 3 -4 6L0 8.500L4 6Q10 3 7.500 -5Z" fill="#4350a6" />
                <path d="M-7 -8Q-3.500 -6.500 0 -8Q3.500 -6.500 7 -8L8 -4.500H-8Z" fill="#c8233c" /><path d="M-8 -4.200H8" stroke="#fff" stroke-width=".8" />
                <text class="shield inter" y="4">{n}</text>
              </g>
            {/each}
            <rect x="201" y="575" width="116" height="10.500" fill="#fff" fill-opacity=".75" />
            <text class="attrib" x="203.500" y="583" textLength="110" lengthAdjust="spacingAndGlyphs">© 2020 Mapbox © OpenStreetMap</text>
          </svg>
          <div class="zonebar">
            <svg viewBox="0 0 18 75" fill="none" stroke="#fff" stroke-width="1.200">
              <path d="M5 5l8 8M13 5l-8 8" stroke-width="1.400" /><path d="M8.500 23.500h-5v8h8v-4.500M7 28l6-6M9.500 21.500h4V26" /><path d="M3.500 40.500h11l-4 5.500v6H8v-6z" /><path d="M5.500 64h7L9 67.500z" fill="#fff" stroke="none" />
            </svg>
          </div>
        </div>
        <div class="filters">
          <h4>Indicators</h4>
          <div class="dropdown"><span>Health index</span><i></i></div>
          <h4 class="second">Avg. Value</h4>
          <div class="range"><span>0.0</span><span>100.0</span></div>
          <svg class="slider" viewBox="0 0 162 12"><path d="M5 6h152" stroke="#666" stroke-width="3.500" /><path d="M8 1.500v9H5a4.500 4.500 0 0 1 0-9zM154 1.500v9h3a4.500 4.500 0 0 0 0-9z" fill="#fff" stroke="#777" /></svg>
          <h4 class="third">Avg. Value</h4>
          <div class="legend"><span>0.0</span><i></i><span>100.0</span></div>
          <p>Higher scores indicate better health.</p>
        </div>
      </div>

      <div class="bottom">
        <div class="indicators">
          <h2>Indicators</h2>
          <div class="table">
            <div class="tr head"><b>Indicators</b><span>Raw Scores</span><span>Final Scores (out of 100)</span></div>
            {#each rows as [name, raw, final]}<div class="tr"><span>{name}</span><em>{raw}</em><em>{final}</em></div>{/each}
          </div>
        </div>
        <div class="rank">
          <h2>Health Index Scores &amp; Rank</h2>
          <div class="bars">
            <div class="list">
              {#each ranks as [id, w], i}
                <div class="row"><span class="id">{id}</span><i class:picked={i === 10} style:width="{w}px"></i><span class="n">{i + 1}</span></div>
              {/each}
            </div>
            <div class="scroll"><i></i></div>
            <div class="tooltip">
              <strong>Census Tract 78.01</strong>
              <span>Dallas County</span><span>City of Dallas</span><span>48113007801</span>
              <span class="gap"><small>Health Index:</small> <b>98.0</b></span>
              <span><small>Rank:</small>&nbsp; <b>11 out of 1172</b></span>
            </div>
          </div>
        </div>
      </div>
    </div>
  </div>

  <nav class="sheetbar">
    <div class="tab source">{@render icon('cyl')}<span>Data Source</span></div>
    <div class="tab active">{@render icon('dash')}<b>Health Index</b></div>
    <div class="tab t1"><span>Map</span></div>
    <div class="tab t2"><span>Rank</span></div>
    <div class="tab t3"><span>Table</span></div>
    <div class="tab t4"><span>Summary Stats</span></div>
    <div class="tab add">{@render icon('sheetadd')}</div><div class="tab add">{@render icon('dashadd')}</div><div class="tab add">{@render icon('storyadd')}</div>
  </nav>

  <footer>
    <span>1172 marks</span><span>1 row by 1 column</span><span>SUM of AVG(Value): 82,744.3</span>
    <div class="cells"><i class="c1"></i><i class="c2"></i><i class="c3"></i><i class="c4"></i>
      <svg class="pager" viewBox="0 0 64 18" fill="#aaa"><path d="M7 6v6h1V6zM13 6v6l-4-3zM26 6v6l-4-3zM36 6v6l4-3zM49 6v6l4-3zM53.500 6v6h1V6z" /></svg>
      <svg class="views" viewBox="0 0 68 18"><path d="M7 4.500h10M7 9h10M7 13.500h10" stroke="#b5b5b5" stroke-width="3" stroke-dasharray="2.600 1" /><path d="M26 4h10v6H26z" fill="#b5b5b5" /><path d="M26 12.500h10" stroke="#b5b5b5" stroke-width="2.500" stroke-dasharray="2.600 1" /><path d="M45 4h10v10H45z" fill="#5c5c5c" /></svg>
    </div>
  </footer>
</div>

<style>
  :global(body) { margin: 0; background: linear-gradient(#1b1947 50%, #a5484f 50%); }
  * { box-sizing: border-box; }
  .window { width: 1600px; height: 1000px; display: flex; flex-direction: column; overflow: hidden; border-radius: 5px; background: #f4f4f4; font: 11.5px/14px Roboto, 'Liberation Sans', sans-serif; color: #444; }
  h1, h2, h3, h4, p { margin: 0; }
  i { font-style: normal; }
  .titlebar { height: 20px; flex: none; display: flex; align-items: center; justify-content: center; background: linear-gradient(#e8e8e8, #cfcfcf); border-bottom: 1px solid #b9b9b9; position: relative; }
  .lights { position: absolute; left: 7px; top: 4px; display: flex; gap: 7px; }
  .lights i { width: 11px; height: 11px; border-radius: 50%; }
  .red { background: #fc5b57; } .amber { background: #fdbc2e; } .green { background: #28c840; }
  .doc { display: flex; align-items: center; gap: 5px; font: 500 12px/18px Inter, Roboto, sans-serif; color: #4a4a4a; padding-right: 3px; }
  .doc-icon { width: 14px; height: 14px; background: #fff; }
  .doc-icon path { stroke: #4b8db5; }
  .doc span { letter-spacing: -.32px; }
  .toolbar { height: 36px; flex: none; display: flex; align-items: center; background: #f4f4f4; border-bottom: 1px solid #dcdcdc; }
  .ic { width: 20px; height: 20px; display: block; flex: none; }
  .tool { width: 20px; flex: none; height: 20px; }
  .tool.logo .ic { width: 16px; height: 16px; margin: 2px; }
  .tool.sep { width: 1px; height: 31px; background: #cfcfcf; }
  .tool.caret, .tool.caretoff { width: 6px; height: auto; color: #666; }
  .tool.caretoff { color: #bbb; }
  .caret i, .caretoff i { display: block; border: 2.8px solid transparent; border-top: 3px solid; border-top-color: currentColor; border-bottom: 0; }
  .tool.pin { width: 27px; height: 27px; background: #e2e2e2; padding: 3px 4px; }
  .tool.combo { width: 88px; height: 20px; border: 1px solid #d8d8d8; display: flex; align-items: center; justify-content: flex-end; padding-right: 5px; }
  .combo i { border: 3px solid transparent; border-top: 3px solid #c4c4c4; border-bottom: 0; }
  .showme { margin-left: auto; margin-right: 26px; display: flex; align-items: center; gap: 5px; color: #222; font-size: 11.6px; letter-spacing: -.43px; }
  .showme svg { width: 15px; height: 14px; }
  .main { flex: 1; display: flex; min-height: 0; }
  aside { width: 187px; flex: none; background: #fafafa; border-right: 1px solid #d4d4d4; display: flex; flex-direction: column; }
  .tabs-top { display: flex; height: 25px; }
  .tabs-top b { width: 101px; padding: 4px 0 0 16px; color: #333; font-weight: 600; font-size: 11.5px; }
  .layout-tab { flex: 1; border-left: 1px solid #ccc; border-bottom: 1px solid #d4d4d4; display: flex; justify-content: space-between; align-items: center; padding: 0 6px 2px 10px; font-size: 11.4px; }
  .layout-tab svg { width: 5px; height: 8px; }
  .devices { height: 87px; padding: 11px 15px 0 16px; border-bottom: 2px solid #e0e0e0; display: flex; flex-direction: column; }
  .dev { height: 16px; line-height: 16px; padding-left: 11.5px; letter-spacing: -.2px; }
  .sel { background: #e5e5e5; } .phone { padding-left: 20.5px; }
  button { margin: 11px 0 0 20px; width: 114px; height: 20px; padding: 0 0 1px; background: #fff; border: 1px solid #c4c4c4; font: inherit; font-size: 11.1px; color: #444; }
  h3 { font-size: 12px; font-weight: 600; color: #333; line-height: 14px; letter-spacing: -.15px; }
  .size { height: 64px; padding: 6px 16px 0; border-bottom: 2px solid #e0e0e0; }
  .select { display: flex; justify-content: space-between; align-items: center; border-bottom: 1px solid #ccc; height: 20px; margin-top: 6px; padding: 0 0 1px 1px; font-size: 11.2px; }
  .select i { border: 3.5px solid transparent; border-top: 4px solid #555; border-bottom: 0; }
  .sheets { padding-top: 7px; flex: 1; }
  .sheets h3 { margin: 0 16px 10px; }
  .sheet { height: 18px; display: flex; align-items: center; gap: 6px; padding-left: 16px; font-size: 11.5px; }
  .sheet svg { width: 16px; height: 16px; }
  .hl { background: #f3f3f3; }
  .objects { height: 211px; border-top: 2px solid #e0e0e0; padding: 6px 16px 0; }
  .obj-grid { display: grid; grid-template-columns: 88px 1fr; grid-auto-rows: 21.4px; margin: 6px 0 0 -3px; }
  .obj { display: flex; align-items: center; gap: 5px; font-size: 10.1px; letter-spacing: -.28px; color: #555; white-space: nowrap; }
  .toggle { display: flex; height: 21px; margin-top: 11px; width: 154px; border: 1px solid #c4c4c4; background: #fff; }
  .toggle span { flex: 1; text-align: center; line-height: 19px; font-size: 11.3px; }
  .toggle .on { background: #666; color: #eee; }
  .check { display: flex; align-items: center; gap: 5px; margin-top: 13px; font-size: 11px; white-space: nowrap; }
  .check svg { width: 13px; height: 13px; }
  .canvas { flex: 1; min-width: 0; background: #dce5e6; padding: 0 7px 0 6px; font-family: 'Noto Sans', 'Open Sans', sans-serif; display: flex; flex-direction: column; }
  h1 { height: 41px; font-size: 22.5px; line-height: 50px; font-weight: 500; text-align: center; color: #333; letter-spacing: -.85px; flex: none; }
  .top { display: flex; height: 496px; flex: none; }
  .mapzone { width: 1224px; flex: none; border: 2px solid #666; padding: 16px 3px 5px 3px; position: relative; height: 496px; background: #e0e8ea; }
  .map { display: block; width: 1213px; height: 471px; border-top: 1px solid #fff; }
  .grip { position: absolute; left: 587px; top: -11px; width: 45px; height: 11px; background: #666; padding: 3px 4px; display: flex; flex-direction: column; gap: 3px; border-radius: 2px 2px 0 0; }
  .grip i { height: 1px; background: #ccc; }
  .zonebar { position: absolute; left: 1220px; top: -2px; width: 19px; height: 75px; background: #666; z-index: 2; border-radius: 0 2px 2px 0; }
  .zonebar svg { display: block; width: 18px; height: 75px; }
  .white { stroke: #fbf8f3; stroke-width: 3.8; } .yellow { stroke: #f4cd60; stroke-width: 3; } .orange { stroke: #f5905c; stroke-width: 3.1; }
  .water { fill: #4fd0f3; }
  .stream { fill: none; stroke: #6fc3e2; stroke-width: 3; stroke-dasharray: 40 4 18 4; }
  .inlet { fill: none; stroke: #4fd0f3; stroke-width: 5; }
  .place { font: 12px 'Noto Sans', sans-serif; fill: #333; text-anchor: middle; stroke: #efe9df; stroke-width: 1.5px; paint-order: stroke; stroke-opacity: .7; }
  .tyler { font-size: 13.5px; }
  .muted { font-family: 'Noto Sans', sans-serif; fill: #3c7a86; fill-opacity: .62; text-anchor: middle; }
  .shield { font: 700 8.3px 'Noto Sans', sans-serif; text-anchor: middle; fill: #333; }
  .inter { fill: #fff; font-size: 8px; }
  .attrib { font: 7.5px 'Liberation Sans', sans-serif; fill: #666; }
  .filters { flex: 1; padding: 7px 0 0 2px; color: #555; white-space: nowrap; }
  h4 { font-size: 10.8px; line-height: 14px; font-weight: 600; color: #444; letter-spacing: -.35px; }
  .dropdown { height: 18px; width: 167px; margin-top: 4px; background: #e9efef; border: 1px solid #c8d0d0; display: flex; align-items: center; justify-content: space-between; font-size: 9.3px; padding-left: 3px; }
  .dropdown i { border: 4px solid transparent; border-top: 4px solid #333; border-bottom: 0; margin-right: 4px; }
  .second { margin-top: 10px; } .third { margin-top: 12px; }
  .range { display: flex; justify-content: space-between; margin: 6px 0 0 4px; width: 159px; font-size: 10.8px; line-height: 14px; }
  .slider { display: block; width: 162px; height: 12px; margin: 3px 0 0 4px; }
  .legend { display: flex; align-items: center; gap: 2px; margin: 5px 0 0 4px; font-size: 10.8px; width: 161px; justify-content: space-between; }
  .legend i { flex: 1; height: 16px; border: 1px solid #b5bdb3; background: linear-gradient(90deg, #2a6498, #0a9dba 45%, #6cc5cb 70%, #a9e3d2); }
  p { font-size: 10.3px; line-height: 13.5px; font-weight: 500; width: 160px; margin: 23px 0 0 4px; text-align: center; white-space: normal; color: #666; letter-spacing: -.28px; }
  .bottom { display: flex; flex: 1; min-height: 0; }
  h2 { font-size: 10.8px; line-height: 14px; font-weight: 500; color: #444; text-align: center; letter-spacing: -.12px; }
  .indicators { width: 676px; padding-left: 5px; flex: none; }
  .indicators h2 { margin: 7px 0 9px; }
  .table { width: 671px; background: #fff; }
  .tr { display: grid; grid-template-columns: 236px 217px 217px; height: 24.42px; align-items: center; line-height: 24px; color: #333; font-size: 11.2px; font-weight: 500; letter-spacing: -.3px; }
  .tr > :first-child { padding-left: 5.5px; }
  .tr > :not(:first-child) { text-align: center; }
  .tr b { font-weight: 600; }
  .tr em { font-style: normal; color: #2a9d8f; font-size: 11px; letter-spacing: 0; }
  .head { height: 26.5px; border-bottom: 1px solid #e4e4e4; padding-top: 2px; }
  .tr:nth-child(odd):not(.head) { background: #f4f4f4; }
  .head span { font-size: 11px; letter-spacing: -.1px; }
  .rank { width: 721px; margin-left: 3px; height: 356px; border: 2px dashed #93a7bb; border-right: 1px solid #9fb0bf; border-bottom: 1px solid #9fb0bf; padding: 0 3px; margin-top: -2px; }
  .rank h2 { margin: 7px 0 10px -17px; }
  .bars { height: 320px; background: #fff; display: flex; position: relative; }
  .list { width: 698px; padding-top: 1px; overflow: hidden; height: 320px; }
  .row { height: 17.85px; display: flex; align-items: center; }
  .id { width: 84px; text-align: right; color: #888; font-size: 11.1px; letter-spacing: 0; }
  .row i { height: 13px; margin-left: 5.5px; background: #abe4d6; flex: none; }
  .row i.picked { outline: 1.5px solid #333; outline-offset: -1px; height: 15px; }
  .n { margin-left: 3.5px; color: #333; font-size: 11px; }
  .scroll { flex: 1; border-left: 1px solid #e2e2e2; background: #fafafa; }
  .scroll i { display: block; width: 7px; height: 16px; margin: 3px 0 0 3px; border-radius: 4px; background: #c2c2c2; }
  .tooltip { position: absolute; left: 187px; top: 193px; width: 153px; height: 125px; background: #fff; border: 1px solid #bbb; box-shadow: 1px 2px 3px rgba(0, 0, 0, .35); display: flex; flex-direction: column; align-items: center; padding-top: 8px; color: #444; font-size: 11.3px; line-height: 16px; white-space: nowrap; letter-spacing: -.08px; }
  .tooltip strong { font-size: 14.2px; line-height: 18px; font-weight: 600; color: #333; letter-spacing: 0; }
  .tooltip small { font-size: inherit; color: #888; }
  .tooltip b { font-weight: 600; color: #333; font-size: 11px; }
  .gap { margin-top: 11px; }
  .sheetbar { height: 27px; flex: none; display: flex; background: #e4e4e4; border-top: 1px solid #cfcfcf; border-bottom: 1px solid #cfcfcf; font-size: 11.6px; color: #666; }
  .tab { border-right: 1px solid #cfcfcf; display: flex; align-items: center; justify-content: center; white-space: nowrap; flex: none; }
  .source { width: 117px; justify-content: flex-start; padding-left: 3px; letter-spacing: -.2px; } .source .ic { margin-right: -2px; }
  .active { width: 92px; background: #fafafa; color: #444; } .active b { font-weight: 600; font-size: 11.4px; } .active .ic { margin-left: -1px; width: 18px; }
  .t1 { width: 34px; } .t2 { width: 37px; } .t3 { width: 38px; } .t4 { width: 93px; } .add { width: 28.5px; }
  footer { height: 19px; flex: none; display: flex; align-items: center; gap: 15px; background: #ebebeb; padding: 1px 0 0 10px; font-size: 10.1px; color: #333; letter-spacing: -.36px; }
  footer > span + span + span { margin-left: -2px; letter-spacing: -.24px; }
  .cells { margin-left: auto; display: flex; height: 19px; width: 336px; border-left: 1px solid #ccc; }
  .cells i { border-right: 1px solid #ccc; flex: none; }
  .c1 { width: 114px; } .c2 { width: 24px; } .c3 { width: 24px; } .c4 { width: 42px; }
  .pager { width: 64px; height: 18px; border-right: 1px solid #ccc; } .views { width: 67px; height: 18px; }
</style>
